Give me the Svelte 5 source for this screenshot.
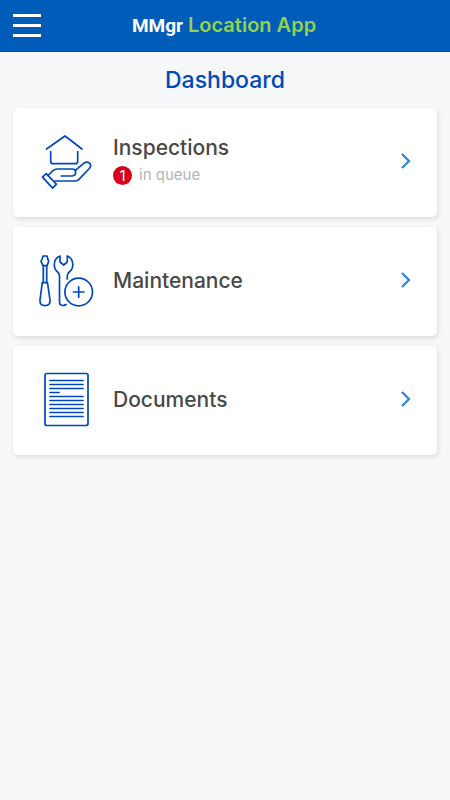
<script lang="ts">
    interface MenuItem {
        id: string;
        title: string;
        queued?: number;
    }

    const items: MenuItem[] = [
        { id: "inspections", title: "Inspections", queued: 1 },
        { id: "maintenance", title: "Maintenance" },
        { id: "documents", title: "Documents" },
    ];

    const textLines = [10, 14, 18, 22, 26, 30, 34, 38, 42, 46];
</script>

<header class="app-bar">
    <button class="menu-button" aria-label="Menu">
        <span></span>
        <span></span>
        <span></span>
    </button>
    <div class="brand"><b>MMgr</b> <span>Location App</span></div>
</header>

<main>
    <h1>Dashboard</h1>
    <nav>
        {#each items as item (item.id)}
            <a class="card" href="#{item.id}">
                <svg class="icon" viewBox="0 0 60 60" aria-hidden="true">
                    {#if item.id === "inspections"}
                        <path d="M10.5 17 29 4l17 13" />
                        <path d="M14.7 19.5v9.7q0 2.5 2.5 2.5h22q2.5 0 2.5-2.5v-9.7" />
                        <path d="m10.2 41.7 10.2 10.4-3.8 4-10.1-11z" />
                        <path d="m12 43.5 5-4.8q2-1.7 4-1.7h15.2q3.5 0 3.5 3.3t-3.5 3.7H25.3" />
                        <path d="m39 38.7 8.7-7.3q3.2-2.4 5.8-.3 2.4 2.4-.2 5.4L43 47.4Q41.3 49 39.5 49H19" />
                    {:else if item.id === "maintenance"}
                        <path d="M7 5h4q.6 3 1.7 5.3L11 14.7H7l-2-4.4Q6.6 8 7 5z" />
                        <path d="M7.3 14.7v17M10.7 14.7v17" />
                        <path d="M6.3 31.7h5.2L14 49q.5 5.7-5 5.7T4 49z" />
                        <path d="M31.3 28v-3q0-2.5 2-4 3.5-2.6 3.5-7.5 0-6-5.5-8.5v6l-3.6 3-3.7-3V5q-5.7 2.5-5.7 8.5 0 4.9 3.3 7.5 1.9 1.5 1.9 4v25.5q0 4 3.3 4 2 0 3.3-1" />
                        <circle cx="42.7" cy="41" r="13.8" />
                        <path d="M37.5 41h10.4M42.7 35.8v10.4" />
                    {:else}
                        <rect x="9" y="3.5" width="43" height="52" rx="2" />
                        {#each textLines as y}
                            <path d="M14 {y + 0.5}H{y === 22 ? 23 : 47}" />
                        {/each}
                    {/if}
                </svg>
                <div class="label">
                    <h2>{item.title}</h2>
                    {#if item.queued}
                        <p><span class="badge">{item.queued}</span>in queue</p>
                    {/if}
                </div>
                <svg class="chevron" viewBox="0 0 12 18" aria-hidden="true">
                    <path d="m2 1 7 7-7 7" />
                </svg>
            </a>
        {/each}
    </nav>
</main>

<style>
    :global(body) {
        background: #f7f8fa;
        font-family: Inter, "Liberation Sans", sans-serif;
    }

    .app-bar {
        display: grid;
        grid-template-columns: 54px 1fr 56px;
        align-items: center;
        height: 52px;
        box-sizing: border-box;
        background: #005cb9;
        border-bottom: 1px solid #0046ad;
    }

    .menu-button {
        display: flex;
        flex-direction: column;
        gap: 7px;
        width: 54px;
        padding: 12px 13px;
        border: none;
        background: none;
        cursor: pointer;
    }

    .menu-button span {
        height: 3px;
        background: #fff;
    }

    .brand {
        text-align: center;
        font-size: 20px;
        line-height: 24px;
        font-weight: 600;
        color: #92d050;
    }

    .brand b {
        font-family: Roboto, sans-serif;
        font-weight: 700;
        font-size: 19px;
        color: #fff;
    }

    main {
        padding: 12px 13px;
    }

    h1 {
        margin: 0 0 12px;
        text-align: center;
        font-size: 23px;
        line-height: 32px;
        font-weight: 500;
        color: #0049b7;
    }

    nav {
        display: flex;
        flex-direction: column;
        gap: 10px;
    }

    .card {
        display: flex;
        align-items: center;
        min-height: 109px;
        box-sizing: border-box;
        padding: 0 25px 2px 23px;
        border-radius: 5px;
        background: #fff;
        box-shadow: 1px 2px 5px rgba(0, 0, 0, 0.12);
        color: #484848;
        text-decoration: none;
    }

    .icon {
        width: 60px;
        height: 60px;
        fill: none;
        stroke: #0049b7;
        stroke-width: 1.7;
        stroke-linecap: round;
        stroke-linejoin: round;
    }

    .label {
        flex: 1;
        padding-left: 17px;
    }

    h2 {
        margin: 0;
        font-size: 21px;
        line-height: 28px;
        font-weight: 500;
    }

    p {
        display: flex;
        align-items: center;
        gap: 7px;
        margin: 3px 0 4px;
        font-size: 15px;
        line-height: 20px;
        color: #b4b4b4;
    }

    .badge {
        width: 19px;
        height: 19px;
        border-radius: 50%;
        background: #d9001b;
        color: #fff;
        text-align: center;
        line-height: 19px;
    }

    .chevron {
        width: 12px;
        height: 18px;
        fill: none;
        stroke: #2b84e0;
        stroke-width: 2.2;
    }
</style>
